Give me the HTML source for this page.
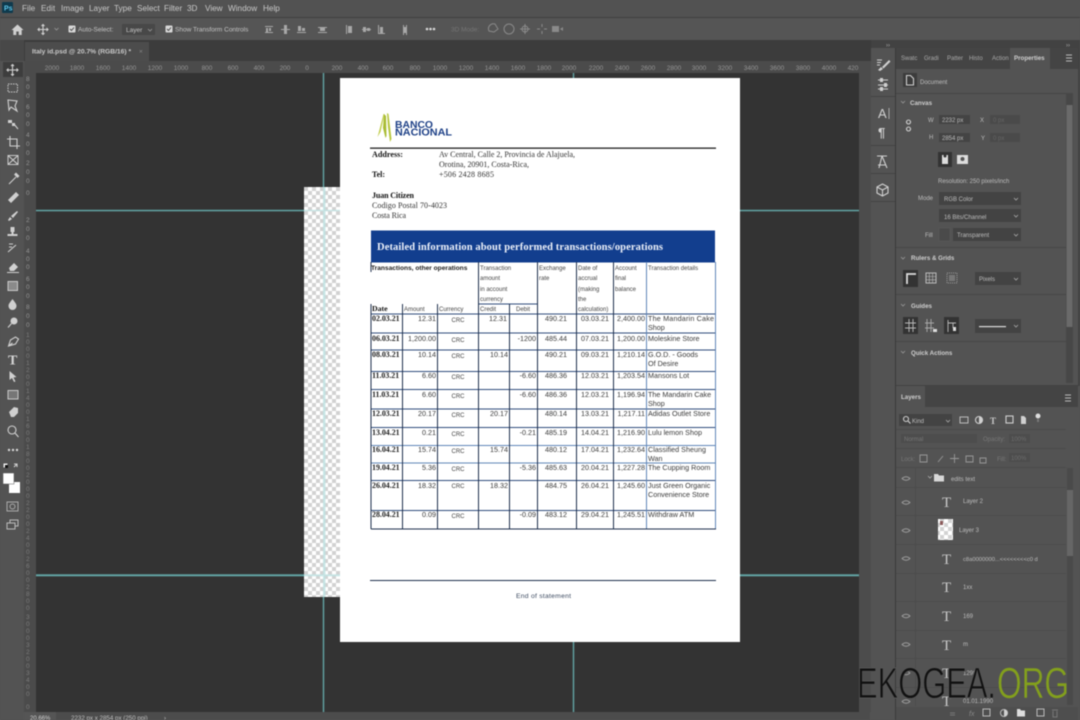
<!DOCTYPE html>
<html><head><meta charset="utf-8"><title>Photoshop</title>
<style>
html,body{margin:0;padding:0;width:1080px;height:720px;overflow:hidden;background:#535353}
svg{display:block;filter:blur(.55px)}
text{font-family:"Liberation Sans",sans-serif}
.m{font-size:8.2px;fill:#c8c8c8}
.o{font-size:6.5px;fill:#c4c4c4}
.r{font-size:6.5px;fill:#959595}
.p{font-size:6px;fill:#bdbdbd}
.h{font-size:6.2px;font-weight:bold;fill:#cfcfcf}
.s{font-family:"Liberation Serif",serif;font-size:8px;fill:#333}
.sb{font-family:"Liberation Serif",serif;font-size:8px;font-weight:bold;fill:#111}
.t{font-size:7.2px;fill:#3a3a3a}
.th{font-size:6px;fill:#444}
.d{font-family:"Liberation Serif",serif;font-size:7.9px;font-weight:bold;fill:#222}
.i{fill:none;stroke:#d0d0d0;stroke-width:1.1}
.f{fill:#d0d0d0}
.e{text-anchor:end}.c{text-anchor:middle}
</style></head><body>
<svg width="1080" height="720" viewBox="0 0 1080 720" xmlns="http://www.w3.org/2000/svg">
<defs>
<pattern id="ch" width="8" height="8" patternUnits="userSpaceOnUse" x="304" y="187"><rect width="8" height="8" fill="#fff"/><rect width="4" height="4" fill="#d2d2d2"/><rect x="4" y="4" width="4" height="4" fill="#d2d2d2"/></pattern>
</defs>
<rect width="1080" height="720" fill="#535353"/>
<!-- menu -->
<rect x="0" y="0" width="1080" height="17" fill="#525252"/>
<rect x="0" y="17" width="1080" height="1" fill="#404040"/>
<rect x="2" y="2" width="11" height="11" rx="1" fill="#0f3a4d"/>
<text x="4" y="10.5" style="font-size:7px;font-weight:bold;fill:#5fc6ea">Ps</text>
<text class="m" x="22" y="11">File</text><text class="m" x="41" y="11">Edit</text><text class="m" x="61" y="11">Image</text><text class="m" x="89" y="11">Layer</text><text class="m" x="114" y="11">Type</text><text class="m" x="137" y="11">Select</text><text class="m" x="164" y="11">Filter</text><text class="m" x="187" y="11">3D</text><text class="m" x="205" y="11">View</text><text class="m" x="228" y="11">Window</text><text class="m" x="263" y="11">Help</text>
<!-- options bar -->
<rect x="0" y="18" width="1080" height="22" fill="#555"/>
<path class="f" d="M17.500 24.500l6 5.500h-1.800v5h-3v-3.500h-2.400v3.500h-3v-5h-1.800z"/>
<path class="i" d="M43 24.500v10M38 29.500h10M41.500 26l1.500-1.500 1.500 1.500M41.500 33l1.500 1.500 1.500-1.500M39.500 28l-1.500 1.500 1.500 1.500M46.500 28l1.500 1.500-1.500 1.500"/>
<path d="M54.500 28l2 2 2-2" fill="none" stroke="#999" stroke-width=".8"/>
<rect x="68.500" y="25.500" width="7" height="7" rx="1" fill="#d8d8d8"/><path d="M70 29l1.500 1.500 2.500-3" fill="none" stroke="#444" stroke-width=".9"/>
<text class="o" x="78" y="31.500">Auto-Select:</text>
<rect x="122" y="24" width="33" height="11" fill="#484848"/><text class="o" x="126" y="32">Layer</text><path d="M148 29l2 2 2-2" fill="none" stroke="#999" stroke-width=".8"/>
<rect x="165.500" y="25.500" width="7" height="7" rx="1" fill="#d8d8d8"/><path d="M167 29l1.500 1.500 2.500-3" fill="none" stroke="#444" stroke-width=".9"/>
<text class="o" x="175" y="31.500">Show Transform Controls</text>
<g fill="#a8a8a8">
<rect x="265" y="26" width="8" height="1"/><rect x="266" y="28" width="2" height="4"/><rect x="269" y="28" width="2" height="3"/><rect x="265" y="32" width="8" height="1"/>
<rect x="281" y="29" width="9" height="1"/><rect x="284" y="25" width="3" height="9"/>
<rect x="297" y="32" width="9" height="1"/><rect x="298" y="26" width="3" height="5"/><rect x="302" y="28" width="3" height="3"/>
<rect x="318" y="27" width="9" height="1"/><rect x="318" y="32" width="9" height="1"/><rect x="320" y="28" width="5" height="3"/>
<rect x="346" y="25" width="1" height="9"/><rect x="348" y="26" width="4" height="7"/>
<rect x="362" y="29" width="9" height="1"/><rect x="363" y="27" width="3" height="5"/><rect x="367" y="28" width="3" height="3"/>
<rect x="378" y="25" width="1" height="9"/><rect x="378" y="33" width="7" height="1"/><rect x="380" y="27" width="3" height="6"/>
<rect x="403" y="25" width="1" height="10"/><rect x="406" y="25" width="1" height="10"/><rect x="404" y="27" width="2" height="6"/>
</g>
<g fill="#d8d8d8"><circle cx="427" cy="29" r="1.300"/><circle cx="430.500" cy="29" r="1.300"/><circle cx="434" cy="29" r="1.300"/></g>
<text class="o" x="451" y="31.500" style="fill:#757575">3D Mode:</text>
<g fill="none" stroke="#8a8a8a" stroke-width="1"><path d="M489 31a5 5 0 0 1 6-7l3 5-4 3z"/><circle cx="509" cy="29" r="5"/><path d="M525 24v10M520 29h10"/><circle cx="525" cy="29" r="3"/><path d="M542 24v3M542 31v3M537 29h3M544 29h3"/></g>
<rect x="552" y="26" width="7" height="6" fill="#8a8a8a"/><path d="M560 29l3-2v4z" fill="#8a8a8a"/>
<!-- doc tabs strip -->
<rect x="0" y="40" width="895" height="21" fill="#3c3c3c"/>
<rect x="0" y="40" width="24" height="21" fill="#484848"/>
<rect x="25" y="42" width="124" height="19" fill="#4c4c4c"/>
<text x="32" y="53.500" style="font-size:6.700px;font-weight:bold;fill:#c9c9c9">Italy id.psd @ 20.7% (RGB/16) *</text>
<text x="139" y="53.500" style="font-size:6.500px;fill:#8a8a8a">×</text>
<!-- rulers -->
<rect x="24" y="61" width="835" height="12" fill="#4b4b4b"/>
<rect x="24" y="73" width="12" height="639" fill="#4b4b4b"/>
<g class="r">
<text class="r c" x="52" y="70">2000</text><text class="r c" x="77" y="70">1800</text><text class="r c" x="103" y="70">1600</text><text class="r c" x="129" y="70">1400</text><text class="r c" x="155" y="70">1200</text><text class="r c" x="181" y="70">1000</text><text class="r c" x="207" y="70">800</text><text class="r c" x="233" y="70">600</text><text class="r c" x="259" y="70">400</text><text class="r c" x="285" y="70">200</text><text class="r c" x="307" y="70">0</text><text class="r c" x="337" y="70">200</text><text class="r c" x="363" y="70">400</text><text class="r c" x="388" y="70">600</text><text class="r c" x="415" y="70">800</text><text class="r c" x="440" y="70">1000</text><text class="r c" x="466" y="70">1200</text><text class="r c" x="492" y="70">1400</text><text class="r c" x="518" y="70">1600</text><text class="r c" x="544" y="70">1800</text><text class="r c" x="569" y="70">2000</text><text class="r c" x="596" y="70">2200</text><text class="r c" x="622" y="70">2400</text><text class="r c" x="648" y="70">2600</text><text class="r c" x="674" y="70">2800</text><text class="r c" x="699" y="70">3000</text><text class="r c" x="725" y="70">3200</text><text class="r c" x="751" y="70">3400</text><text class="r c" x="777" y="70">3600</text><text class="r c" x="803" y="70">3800</text><text class="r c" x="829" y="70">4000</text><text class="r c" x="853" y="70">420</text>
</g>
<g>
<text class="r" x="26" y="81">8</text><text class="r" x="26" y="89">0</text><text class="r" x="26" y="98">0</text>
<text class="r" x="26" y="109">6</text><text class="r" x="26" y="117">0</text><text class="r" x="26" y="126">0</text>
<text class="r" x="26" y="137">4</text><text class="r" x="26" y="146">0</text><text class="r" x="26" y="155">0</text>
<text class="r" x="26" y="165">2</text><text class="r" x="26" y="174">0</text><text class="r" x="26" y="183">0</text>
<text class="r" x="26" y="195">0</text>
<text class="r" x="26" y="222">2</text><text class="r" x="26" y="231">0</text><text class="r" x="26" y="240">0</text>
<text class="r" x="26" y="253">4</text><text class="r" x="26" y="261">0</text><text class="r" x="26" y="269">0</text>
<text class="r" x="26" y="281">6</text><text class="r" x="26" y="289">0</text><text class="r" x="26" y="298">0</text>
<text class="r" x="26" y="309">8</text><text class="r" x="26" y="318">0</text><text class="r" x="26" y="327">0</text>
</g>
<g style="opacity:.65">
<text class="r" x="26" y="337">1</text><text class="r" x="26" y="344">0</text><text class="r" x="26" y="351">0</text><text class="r" x="26" y="358">0</text>
<text class="r" x="26" y="365">1</text><text class="r" x="26" y="372">2</text><text class="r" x="26" y="379">0</text><text class="r" x="26" y="386">0</text>
<text class="r" x="26" y="393">1</text><text class="r" x="26" y="400">4</text><text class="r" x="26" y="407">0</text><text class="r" x="26" y="414">0</text>
<text class="r" x="26" y="421">1</text><text class="r" x="26" y="428">6</text><text class="r" x="26" y="435">0</text><text class="r" x="26" y="442">0</text>
<text class="r" x="26" y="449">1</text><text class="r" x="26" y="456">8</text><text class="r" x="26" y="463">0</text><text class="r" x="26" y="470">0</text>
<text class="r" x="26" y="477">2</text><text class="r" x="26" y="484">0</text><text class="r" x="26" y="491">0</text><text class="r" x="26" y="498">0</text>
<text class="r" x="26" y="505">2</text><text class="r" x="26" y="512">2</text><text class="r" x="26" y="519">0</text><text class="r" x="26" y="526">0</text>
<text class="r" x="26" y="533">2</text><text class="r" x="26" y="540">4</text><text class="r" x="26" y="547">0</text><text class="r" x="26" y="554">0</text>
<text class="r" x="26" y="561">2</text><text class="r" x="26" y="568">6</text><text class="r" x="26" y="575">0</text><text class="r" x="26" y="582">0</text>
<text class="r" x="26" y="589">2</text><text class="r" x="26" y="596">8</text><text class="r" x="26" y="603">0</text><text class="r" x="26" y="610">0</text>
<text class="r" x="26" y="619">3</text><text class="r" x="26" y="626">0</text><text class="r" x="26" y="633">0</text><text class="r" x="26" y="640">0</text>
<text class="r" x="26" y="647">3</text><text class="r" x="26" y="654">2</text><text class="r" x="26" y="661">0</text><text class="r" x="26" y="668">0</text>
<text class="r" x="26" y="675">3</text><text class="r" x="26" y="682">4</text><text class="r" x="26" y="689">0</text><text class="r" x="26" y="696">0</text>
<text class="r" x="26" y="709">0</text>
</g>
<!-- canvas -->
<rect x="36" y="73" width="823" height="639" fill="#333"/>
<rect x="859" y="61" width="12" height="651" fill="#4c4c4c"/>
<rect x="304" y="187" width="36" height="410" fill="url(#ch)"/>
<rect x="340" y="78" width="400" height="564" fill="#fff"/>
<!-- guides -->
<g fill="#63a5a5">
<rect x="322.800" y="73" width="1.400" height="114"/><rect x="322.800" y="597" width="1.400" height="115"/>
<rect x="572.800" y="73" width="1.400" height="5"/><rect x="572.800" y="642" width="1.400" height="70"/>
<rect x="36" y="209.800" width="268" height="1.500"/><rect x="740" y="209.800" width="119" height="1.500"/>
<rect x="36" y="574.300" width="268" height="2"/><rect x="740" y="574.300" width="119" height="2"/>
</g>
<g fill="#bfe3e3" opacity=".8"><rect x="323" y="187" width="2.500" height="410"/><rect x="304" y="209.800" width="36" height="1.500"/><rect x="304" y="574.300" width="36" height="2"/></g>
<!-- logo -->
<path d="M377.500 137l6-23 1 0-4 18z" fill="#c3cf4f"/>
<path d="M384 114l2 2 .5 20-1 2-2.500-10z" fill="#a9bc34"/>
<path d="M387 113l1.500 1 3 25-1.500 3-2-15z" fill="#b6c63c"/>
<text x="395" y="128" textLength="38" lengthAdjust="spacingAndGlyphs" style="font-size:10px;font-weight:bold;fill:#1c3f86">BANCO</text>
<text x="395" y="135.500" textLength="57" lengthAdjust="spacingAndGlyphs" style="font-size:10px;font-weight:bold;fill:#1c3f86">NACIONAL</text>
<rect x="370" y="147.500" width="346" height="1.300" fill="#222"/>
<!-- address -->
<text class="sb" x="372" y="157" textLength="31" lengthAdjust="spacingAndGlyphs">Address:</text>
<text class="s" x="439" y="157" textLength="136">Av Central, Calle 2, Provincia de Alajuela,</text>
<text class="s" x="439" y="167" textLength="90">Orotina, 20901, Costa-Rica,</text>
<text class="sb" x="372" y="177">Tel:</text>
<text class="s" x="439" y="177" textLength="55">+506 2428 8685</text>
<text class="sb" x="372" y="198" textLength="42">Juan Citizen</text>
<text class="s" x="372" y="208" textLength="75">Codigo Postal 70-4023</text>
<text class="s" x="372" y="218" textLength="34">Costa Rica</text>
<!-- banner -->
<rect x="371" y="230.500" width="344" height="32" fill="#123e8e"/>
<text x="377" y="250" textLength="286" style="font-family:'Liberation Serif',serif;font-size:10.500px;font-weight:bold;fill:#eef2fa">Detailed information about performed transactions/operations</text>
<!-- table lines -->
<g fill="#2f4c7c">
<rect x="371" y="313.500" width="344" height="1"/><rect x="371" y="332.500" width="344" height="1"/><rect x="371" y="349.500" width="344" height="1"/><rect x="371" y="371" width="344" height="1"/><rect x="371" y="389" width="344" height="1"/><rect x="371" y="408.500" width="344" height="1"/><rect x="371" y="427" width="344" height="1"/><rect x="371" y="480" width="344" height="1"/><rect x="371" y="510" width="344" height="1"/>
<rect x="478" y="303.500" width="59" height="1"/>
</g>
<g fill="#5f86b8">
<rect x="371" y="445" width="344" height="1"/><rect x="371" y="462.500" width="344" height="1"/>
<rect x="646" y="262" width="1" height="267"/><rect x="715" y="262" width="1" height="267"/>
</g>
<g fill="#1e2f4d">
<rect x="370.500" y="304" width="1" height="225"/><rect x="402" y="304" width="1" height="225"/><rect x="437" y="304" width="1" height="225"/><rect x="478" y="262" width="1" height="267"/><rect x="509" y="304" width="1" height="225"/><rect x="537" y="262" width="1" height="267"/><rect x="576" y="262" width="1" height="267"/><rect x="613" y="262" width="1" height="267"/>
<rect x="371" y="528.500" width="345" height="1"/>
<rect x="370.500" y="262" width="1" height="10"/>
</g>
<!-- table header -->
<text x="371" y="270" style="font-size:6.600px;font-weight:bold;fill:#222">Transactions, other operations</text>
<g class="th">
<text class="th" x="480" y="270">Transaction</text><text class="th" x="480" y="280">amount</text><text class="th" x="480" y="291">in account</text><text class="th" x="480" y="301">currency</text>
<text class="th" x="539" y="270">Exchange</text><text class="th" x="539" y="280">rate</text>
<text class="th" x="578" y="270">Date of</text><text class="th" x="578" y="280">accrual</text><text class="th" x="578" y="291">(making</text><text class="th" x="578" y="301">the</text><text class="th" x="578" y="311">calculation)</text>
<text class="th" x="615" y="270">Account</text><text class="th" x="615" y="280">final</text><text class="th" x="615" y="291">balance</text>
<text class="th" x="648" y="270">Transaction details</text>
<text class="th" x="404" y="311">Amount</text><text class="th" x="439" y="311">Currency</text><text class="th" x="480" y="311">Credit</text><text class="th" x="516" y="311">Debit</text>
</g>
<text x="372" y="311" style="font-family:'Liberation Serif',serif;font-size:7.800px;font-weight:bold;fill:#111">Date</text>
<!-- rows -->
<text class="d" x="372" y="321">02.03.21</text><text class="t e" x="436" y="321">12.31</text><text class="th c" x="458" y="322">CRC</text><text class="t e" x="507" y="321">12.31</text><text class="t e" x="567" y="321">490.21</text><text class="t e" x="609" y="321">03.03.21</text><text class="t e" x="645" y="321">2,400.00</text><text class="t" x="648" y="321" textLength="66">The Mandarin   Cake</text><text class="t" x="648" y="330">Shop</text>
<text class="d" x="372" y="341">06.03.21</text><text class="t e" x="436" y="341">1,200.00</text><text class="th c" x="458" y="342">CRC</text><text class="t e" x="536" y="341">-1200</text><text class="t e" x="567" y="341">485.44</text><text class="t e" x="609" y="341">07.03.21</text><text class="t e" x="645" y="341">1,200.00</text><text class="t" x="648" y="341">Moleskine Store</text>
<text class="d" x="372" y="357">08.03.21</text><text class="t e" x="436" y="357">10.14</text><text class="th c" x="458" y="358">CRC</text><text class="t e" x="508" y="357">10.14</text><text class="t e" x="567" y="357">490.21</text><text class="t e" x="609" y="357">09.03.21</text><text class="t e" x="645" y="357">1,210.14</text><text class="t" x="648" y="357">G.O.D. - Goods</text><text class="t" x="648" y="366">Of Desire</text>
<text class="d" x="372" y="378">11.03.21</text><text class="t e" x="436" y="378">6.60</text><text class="th c" x="458" y="379">CRC</text><text class="t e" x="536" y="378">-6.60</text><text class="t e" x="567" y="378">486.36</text><text class="t e" x="609" y="378">12.03.21</text><text class="t e" x="645" y="378">1,203.54</text><text class="t" x="648" y="378">Mansons Lot</text>
<text class="d" x="372" y="397">11.03.21</text><text class="t e" x="436" y="397">6.60</text><text class="th c" x="458" y="398">CRC</text><text class="t e" x="536" y="397">-6.60</text><text class="t e" x="567" y="397">486.36</text><text class="t e" x="609" y="397">12.03.21</text><text class="t e" x="645" y="397">1,196.94</text><text class="t" x="648" y="397">The Mandarin Cake</text><text class="t" x="648" y="406">Shop</text>
<text class="d" x="372" y="416">12.03.21</text><text class="t e" x="436" y="416">20.17</text><text class="th c" x="458" y="417">CRC</text><text class="t e" x="508" y="416">20.17</text><text class="t e" x="567" y="416">480.14</text><text class="t e" x="609" y="416">13.03.21</text><text class="t e" x="645" y="416">1,217.11</text><text class="t" x="648" y="416">Adidas Outlet Store</text>
<text class="d" x="372" y="435">13.04.21</text><text class="t e" x="436" y="435">0.21</text><text class="th c" x="458" y="436">CRC</text><text class="t e" x="536" y="435">-0.21</text><text class="t e" x="567" y="435">485.19</text><text class="t e" x="609" y="435">14.04.21</text><text class="t e" x="645" y="435">1,216.90</text><text class="t" x="648" y="435">Lulu lemon Shop</text>
<text class="d" x="372" y="452">16.04.21</text><text class="t e" x="436" y="452">15.74</text><text class="th c" x="458" y="453">CRC</text><text class="t e" x="508" y="452">15.74</text><text class="t e" x="567" y="452">480.12</text><text class="t e" x="609" y="452">17.04.21</text><text class="t e" x="645" y="452">1,232.64</text><text class="t" x="648" y="452">Classified Sheung</text><text class="t" x="648" y="461">Wan</text>
<text class="d" x="372" y="470">19.04.21</text><text class="t e" x="436" y="470">5.36</text><text class="th c" x="458" y="471">CRC</text><text class="t e" x="536" y="470">-5.36</text><text class="t e" x="567" y="470">485.63</text><text class="t e" x="609" y="470">20.04.21</text><text class="t e" x="645" y="470">1,227.28</text><text class="t" x="648" y="470">The Cupping Room</text>
<text class="d" x="372" y="488">26.04.21</text><text class="t e" x="436" y="488">18.32</text><text class="th c" x="458" y="488">CRC</text><text class="t e" x="508" y="488">18.32</text><text class="t e" x="567" y="488">484.75</text><text class="t e" x="609" y="488">26.04.21</text><text class="t e" x="645" y="488">1,245.60</text><text class="t" x="648" y="488">Just Green Organic</text><text class="t" x="648" y="497">Convenience Store</text>
<text class="d" x="372" y="517">28.04.21</text><text class="t e" x="436" y="517">0.09</text><text class="th c" x="458" y="518">CRC</text><text class="t e" x="536" y="517">-0.09</text><text class="t e" x="567" y="517">483.12</text><text class="t e" x="609" y="517">29.04.21</text><text class="t e" x="645" y="517">1,245.51</text><text class="t" x="648" y="517">Withdraw ATM</text>
<rect x="370" y="580" width="346" height="1" fill="#1e2f4d"/>
<text x="516" y="598" textLength="55" style="font-size:6.800px;fill:#3c4a60">End of statement</text>
<!-- toolbar -->
<rect x="0" y="61" width="24" height="659" fill="#535353"/>
<rect x="3" y="62" width="20" height="15" fill="#3d3d3d"/>
<path class="i" d="M12.500 64.500v11M7 70h11M11 66l1.500-1.500 1.500 1.500M11 74l1.500 1.500 1.500-1.500M8.500 68.500l-1.500 1.500 1.500 1.500M16.500 68.500l1.500 1.500-1.500 1.500"/>
<rect x="8" y="84" width="9.500" height="8" fill="none" stroke="#c8c8c8" stroke-dasharray="1.500 1"/>
<path class="i" d="M8 100l9 1-2 5 2 5-6-4-2 3z"/>
<path class="f" d="M8 120h4v3h-4zM12 123h3v3h-3z"/><path class="i" d="M14 124l4 5"/>
<path class="i" d="M10 136v10h10M7 139h10v10"/>
<rect x="8" y="155.500" width="10" height="9" fill="none" stroke="#c8c8c8"/><path class="i" d="M8 155.500l10 9M18 155.500l-10 9"/>
<path class="i" d="M9 184l7-7"/><path class="f" d="M14 174.500l3.500 3.500 2-2-3.500-3.500z"/>
<path class="f" d="M8 200l8-8 3 3-8 8z"/>
<path class="f" d="M8 220l2-3 2 2-3 2zM11 216l6-5 1 1-5 6z"/>
<path class="f" d="M10.500 227h4v5h-1v2h4v2h-10v-2h4v-2h-1z"/>
<path class="i" d="M8 252l8-7"/><path class="i" d="M9 244h4M9 247h3"/>
<path class="f" d="M9 268l5-5 4 4-4 4h-4z"/><rect x="7" y="272" width="12" height="1" fill="#d0d0d0"/>
<rect x="8" y="281.500" width="9.500" height="9" fill="#8a8a8a" stroke="#c8c8c8"/>
<path class="f" d="M12.500 299c3 4 4 5 4 7a4 4 0 0 1-8 0c0-2 1-3 4-7z"/>
<circle cx="14" cy="321" r="3.500" fill="#d0d0d0"/><path class="i" d="M11.500 323.500l-3.500 4"/>
<path class="i" d="M8.500 346l2-6 5-3 3 2-3 5zM8.500 346l4-3"/>
<text x="8" y="364.500" style="font-family:'Liberation Serif',serif;font-size:14px;font-weight:bold;fill:#d4d4d4">T</text>
<path class="f" d="M9.500 371l7 6-3 .5 2 4-1.500 .5-2-4-2.500 2z"/>
<rect x="8" y="390.500" width="10" height="8.500" fill="#767676" stroke="#c8c8c8"/>
<path class="f" d="M9 412l5-5 4 1v5l-4 4h-3z"/>
<circle cx="12" cy="430" r="4" class="i"/><path class="i" d="M15 433l3.500 4" stroke-width="1.600"/>
<g fill="#d8d8d8"><circle cx="9" cy="450" r="1.200"/><circle cx="13" cy="450" r="1.200"/><circle cx="17" cy="450" r="1.200"/></g>
<rect x="3.500" y="463.500" width="4" height="4" fill="#eee"/><rect x="5" y="465" width="3" height="3" fill="#111"/>
<path class="i" d="M14 464l3 0 0 3M14 467l3-3" stroke-width=".8"/>
<rect x="9" y="482" width="11" height="11" fill="#fff"/>
<rect x="3" y="473" width="11" height="11" fill="#fff" stroke="#555" stroke-width=".5"/>
<rect x="7" y="502" width="11" height="9" fill="none" stroke="#aaa"/><circle cx="12.500" cy="506.500" r="2.500" fill="none" stroke="#aaa"/>
<rect x="10" y="520" width="8" height="6" fill="#535353" stroke="#bbb"/><rect x="7" y="523" width="8" height="6" fill="#535353" stroke="#bbb"/>
<!-- status bar -->
<rect x="24" y="712" width="846" height="8" fill="#4c4c4c"/>
<rect x="24" y="712" width="32" height="8" fill="#555"/>
<text x="30" y="720" style="font-size:6px;fill:#d0d0d0">20.66%</text>
<text x="71" y="720" style="font-size:6.200px;fill:#c0c0c0">2232 px x 2854 px (250 ppi)</text>
<text x="164" y="720" style="font-size:6px;fill:#c0c0c0">›</text>
<!-- right dock -->
<rect x="871" y="40" width="209" height="680" fill="#424242"/>
<rect x="871" y="48" width="24" height="672" fill="#535353"/>
<rect x="895" y="48" width="1" height="672" fill="#3a3a3a"/>
<rect x="871" y="96" width="24" height="1" fill="#444"/><rect x="871" y="145" width="24" height="1" fill="#444"/><rect x="871" y="173" width="24" height="1" fill="#444"/><rect x="871" y="201" width="24" height="1" fill="#444"/>
<text x="1066" y="47" style="font-size:6px;fill:#aaa">››</text><text x="886" y="47" style="font-size:6px;fill:#aaa">››</text>
<path class="f" d="M882 67l7-7 1.500 1.500-7 7zM878 70l3-3 2 2-3 2z"/><path class="i" d="M877 60h5M877 62.500h4M877 65h3" stroke-width=".7"/>
<path class="i" d="M878 80h10M878 85h10M878 89h10"/><rect x="880" y="78" width="3" height="4" fill="#d0d0d0"/><rect x="884" y="83" width="3" height="4" fill="#d0d0d0"/><rect x="880" y="87" width="3" height="4" fill="#d0d0d0"/>
<text x="878" y="118" style="font-size:13px;fill:#d0d0d0">A</text><rect x="888.500" y="108" width="1" height="11" fill="#aaa"/>
<text x="878" y="137" style="font-size:13px;font-weight:bold;fill:#d0d0d0">¶</text>
<path class="i" d="M877 156h10M882 156l-3 12M882 156l5 12M878 165h8"/>
<path class="i" d="M882.500 184l5.500 3v6l-5.500 3-5.500-3v-6zM877 187l5.500 3 5.500-3M882.500 190v6"/>
<!-- properties panel -->
<rect x="896" y="48" width="182" height="337" fill="#535353"/>
<rect x="896" y="48" width="182" height="21" fill="#444"/>
<rect x="1010" y="48" width="40" height="21" fill="#535353"/>
<text class="p" x="901" y="60" style="fill:#aaa">Swatc</text><text class="p" x="924" y="60" style="fill:#aaa">Gradi</text><text class="p" x="947" y="60" style="fill:#aaa">Patter</text><text class="p" x="969" y="60" style="fill:#aaa">Histo</text><text class="p" x="992" y="60" style="fill:#aaa">Action</text>
<text class="h" x="1014" y="60">Properties</text>
<path d="M1066 55h6M1066 58h6M1066 61h6" stroke="#bbb" stroke-width="1"/>
<rect x="896" y="93" width="170" height="1" fill="#464646"/>
<rect x="903" y="73" width="14" height="14" fill="#3c3c3c"/>
<path class="i" d="M906.500 75.500h4l3 3v6.500h-7z"/>
<text class="p" x="920" y="84">Document</text>
<path d="M901 101l2 2 2-2" fill="none" stroke="#999" stroke-width=".8"/>
<text class="h" x="910" y="105">Canvas</text>
<rect x="1066" y="93" width="7" height="290" fill="#474747"/><rect x="1066.500" y="105" width="6" height="222" fill="#6a6a6a"/>
<text class="p" x="928" y="122">W</text>
<rect x="939" y="115" width="31" height="9" fill="#444"/><text class="p" x="942" y="122">2232 px</text>
<text class="p" x="980" y="122">X</text><rect x="990" y="115" width="30" height="9" fill="#4a4a4a"/><text class="p" x="993" y="122" style="fill:#666">0 px</text>
<text class="p" x="929" y="139">H</text>
<rect x="939" y="133" width="31" height="9" fill="#444"/><text class="p" x="942" y="140">2854 px</text>
<text class="p" x="981" y="140">Y</text><rect x="990" y="133" width="30" height="9" fill="#4a4a4a"/><text class="p" x="993" y="140" style="fill:#666">0 px</text>
<path class="i" d="M908.500 124a2 2 0 1 1 .01 0zM908.500 131a2 2 0 1 1 .01 0z" stroke-width=".9"/>
<rect x="938" y="152" width="14" height="15" fill="#333"/><rect x="942" y="155" width="6" height="9" fill="#ddd"/><circle cx="945" cy="156" r="1.500" fill="#333"/>
<rect x="957" y="155" width="11" height="9" fill="#ddd"/><circle cx="962.500" cy="159" r="2" fill="#555"/>
<text class="p" x="938" y="183">Resolution: 250 pixels/inch</text>
<text class="p" x="918" y="200">Mode</text>
<rect x="939" y="192" width="82" height="13" fill="#434343"/><text class="p" x="944" y="201">RGB Color</text><path d="M1014 198l2 2 2-2" fill="none" stroke="#aaa" stroke-width=".8"/>
<rect x="939" y="209" width="82" height="13" fill="#434343"/><text class="p" x="944" y="219">16 Bits/Channel</text><path d="M1014 215l2 2 2-2" fill="none" stroke="#aaa" stroke-width=".8"/>
<text class="p" x="925" y="237">Fill</text>
<rect x="939" y="228" width="11" height="13" fill="#4a4a4a" stroke="#5c5c5c" stroke-width=".5"/>
<rect x="953" y="228" width="68" height="13" fill="#434343"/><text class="p" x="957" y="237">Transparent</text><path d="M1014 234l2 2 2-2" fill="none" stroke="#aaa" stroke-width=".8"/>
<rect x="896" y="247" width="170" height="1" fill="#474747"/>
<path d="M901 257l2 2 2-2" fill="none" stroke="#999" stroke-width=".8"/>
<text class="h" x="911" y="260">Rulers &amp; Grids</text>
<rect x="903" y="270" width="15" height="17" fill="#333"/><path d="M907 284v-10h9" fill="none" stroke="#ddd" stroke-width="1.800"/>
<rect x="926" y="273" width="10" height="10" fill="none" stroke="#bbb"/><path d="M926 276.500h10M926 279.800h10M929.300 273v10M932.600 273v10" stroke="#bbb" stroke-width=".6"/>
<rect x="947" y="273" width="10" height="10" fill="none" stroke="#999" stroke-dasharray="1 1"/><rect x="949" y="275" width="6" height="6" fill="#777"/>
<rect x="975" y="272" width="46" height="13" fill="#434343"/><text class="p" x="979" y="281">Pixels</text><path d="M1014 278l2 2 2-2" fill="none" stroke="#aaa" stroke-width=".8"/>
<rect x="896" y="294" width="170" height="1" fill="#474747"/>
<path d="M901 304l2 2 2-2" fill="none" stroke="#999" stroke-width=".8"/>
<text class="h" x="911" y="308">Guides</text>
<rect x="903" y="317" width="15" height="17" fill="#333"/><path d="M909 319v13M913 319v13M905 323h11M905 328h11" stroke="#bbb" stroke-width=".9"/>
<path d="M927 319v13M931 319v13M925 323h9M925 328h9" stroke="#aaa" stroke-width=".9"/><rect x="933" y="329" width="4" height="3" fill="#ddd"/>
<rect x="944" y="317" width="15" height="17" fill="#333"/><path d="M948 320v12M948 323h8M953 323v5" stroke="#bbb" stroke-width=".9"/><rect x="953" y="327" width="3" height="4" fill="#ddd"/>
<rect x="975" y="319" width="46" height="14" fill="#434343"/><rect x="979" y="326" width="27" height="1.200" fill="#ddd"/><path d="M1014 325l2 2 2-2" fill="none" stroke="#aaa" stroke-width=".8"/>
<rect x="896" y="341" width="170" height="1" fill="#474747"/>
<path d="M901 351l2 2 2-2" fill="none" stroke="#999" stroke-width=".8"/>
<text class="h" x="911" y="355">Quick Actions</text>
<!-- layers panel -->
<rect x="896" y="386" width="184" height="334" fill="#535353"/>
<rect x="896" y="386" width="182" height="21" fill="#444"/>
<rect x="896" y="386" width="29" height="21" fill="#535353"/>
<text class="h" x="901" y="399">Layers</text>
<path d="M1065 395h6M1065 398h6M1065 401h6" stroke="#bbb" stroke-width="1"/>
<rect x="899" y="414" width="53" height="12" fill="#434343"/>
<circle cx="906" cy="419" r="2.500" class="i"/><path class="i" d="M908 421l2.500 2.500"/>
<text class="p" x="912" y="423">Kind</text><path d="M946 420l2 2 2-2" fill="none" stroke="#aaa" stroke-width=".8"/>
<rect x="960" y="417" width="8" height="6" fill="none" stroke="#bbb"/><circle cx="979" cy="420" r="3.500" class="i"/><path class="f" d="M979 416.500a3.500 3.500 0 0 1 0 7z"/>
<text x="990" y="424" style="font-family:'Liberation Serif',serif;font-size:9px;font-weight:bold;fill:#c8c8c8">T</text>
<rect x="1006" y="416" width="7" height="7" class="i"/><path class="f" d="M1021 416h3l2 2v6h-5z"/>
<circle cx="1038" cy="416" r="2.500" fill="#ddd"/><rect x="1037" y="419" width="2" height="3" fill="#777"/>
<rect x="896" y="429" width="170" height="1" fill="#4b4b4b"/>
<rect x="901" y="434" width="76" height="9" fill="#4d4d4d"/><text class="p" x="904" y="441" style="fill:#777">Normal</text>
<text class="p" x="983" y="441" style="fill:#777">Opacity:</text>
<rect x="1009" y="434" width="21" height="9" fill="#4d4d4d"/><text class="p" x="1011" y="441" style="fill:#6d6d6d">100%</text>
<rect x="896" y="448" width="170" height="1" fill="#4b4b4b"/>
<text class="p" x="901" y="461" style="fill:#777">Lock:</text>
<path d="M920 455h7v7h-7zM938 462l5-6M950 458.500h9M954.500 454v9M966 456h7v6h-7zM980 458h6v5h-6z" fill="none" stroke="#999" stroke-width=".9"/>
<text class="p" x="997" y="461" style="fill:#777">Fill:</text>
<rect x="1009" y="453" width="21" height="9" fill="#4d4d4d"/><text class="p" x="1011" y="460" style="fill:#6d6d6d">100%</text>
<rect x="896" y="467" width="170" height="1" fill="#4b4b4b"/>
<g fill="none" stroke="#999" stroke-width=".9"><path d="M902 478.500q4-3.500 8 0q-4 3.500-8 0z"/><path d="M902 502.500q4-3.500 8 0q-4 3.500-8 0z"/><path d="M902 530.500q4-3.500 8 0q-4 3.500-8 0z"/><path d="M902 558.500q4-3.500 8 0q-4 3.500-8 0z"/><path d="M902 616q4-3.500 8 0q-4 3.500-8 0z"/><path d="M902 644.500q4-3.500 8 0q-4 3.500-8 0z"/><path d="M902 673q4-3.500 8 0q-4 3.500-8 0z"/><path d="M902 701.500q4-3.500 8 0q-4 3.500-8 0z"/></g>
<g fill="#4c4c4c">
<rect x="896" y="487" width="170" height="1"/><rect x="896" y="515" width="170" height="1"/><rect x="896" y="544" width="170" height="1"/><rect x="896" y="573" width="170" height="1"/><rect x="896" y="601" width="170" height="1"/><rect x="896" y="630" width="170" height="1"/><rect x="896" y="658" width="170" height="1"/><rect x="896" y="687" width="170" height="1"/>
<rect x="915" y="468" width="1" height="238"/>
</g>
<path d="M928 476l2 2 2-2" fill="none" stroke="#aaa" stroke-width=".8"/>
<path d="M934 474h4l1 1.500h5v6h-10z" fill="#d8d8d8"/>
<text class="p" x="951" y="481">edits text</text>
<text x="942" y="507" style="font-family:'Liberation Serif',serif;font-size:15px;fill:#c9c9c9">T</text>
<text x="942" y="564" style="font-family:'Liberation Serif',serif;font-size:15px;fill:#c9c9c9">T</text>
<text x="942" y="592" style="font-family:'Liberation Serif',serif;font-size:15px;fill:#c9c9c9">T</text>
<text x="942" y="621" style="font-family:'Liberation Serif',serif;font-size:15px;fill:#c9c9c9">T</text>
<text x="942" y="650" style="font-family:'Liberation Serif',serif;font-size:15px;fill:#c9c9c9">T</text>
<text x="942" y="678" style="font-family:'Liberation Serif',serif;font-size:15px;fill:#c9c9c9">T</text>
<text x="942" y="706" style="font-family:'Liberation Serif',serif;font-size:15px;fill:#c9c9c9">T</text>
<rect x="938" y="519" width="15" height="21" fill="url(#ch)"/><rect x="940" y="521" width="3" height="4" fill="#8a5a5a"/>
<text class="p" x="963" y="503">Layer 2</text>
<text class="p" x="959" y="532">Layer 3</text>
<text class="p" x="963" y="561" style="font-size:5.800px">c8a0000000...&lt;&lt;&lt;&lt;&lt;&lt;&lt;&lt;c0 d</text>
<text class="p" x="963" y="589">1xx</text>
<text class="p" x="963" y="618">169</text>
<text class="p" x="963" y="646">m</text>
<text class="p" x="963" y="675">1298</text>
<text class="p" x="963" y="703">01.01.1990</text>
<rect x="1067" y="468" width="6" height="237" fill="#4a4a4a"/><rect x="1067" y="490" width="6" height="66" fill="#666"/>
<rect x="896" y="707" width="182" height="13" fill="#4e4e4e"/>
<g fill="none" stroke="#bbb" stroke-width="1">
<path d="M950 713h5M950 715h5" stroke="#777"/>
<rect x="983" y="709" width="7" height="7"/><circle cx="1004" cy="713" r="3.500"/><rect x="1037" y="709" width="7" height="7"/>
<path d="M1052 710h6M1053 711v6h4v-6" stroke="#777"/>
</g>
<text x="969" y="716" style="font-size:7px;font-style:italic;fill:#888">fx</text>
<path d="M1017 709h3l1 1.500h4v6h-8z" fill="#ddd"/>
<path class="f" d="M1004 709.500a3.500 3.500 0 0 1 0 7z"/>
<!-- watermark -->
<text x="857" y="698" textLength="139" lengthAdjust="spacingAndGlyphs" stroke="#555" stroke-width=".9" style="font-size:44px;fill:#111">EKOGEA.</text>
<text x="997" y="698" textLength="72" lengthAdjust="spacingAndGlyphs" stroke="#555" stroke-width=".5" style="font-size:44px;fill:#83a01c">ORG</text>
</svg>
</body></html>
